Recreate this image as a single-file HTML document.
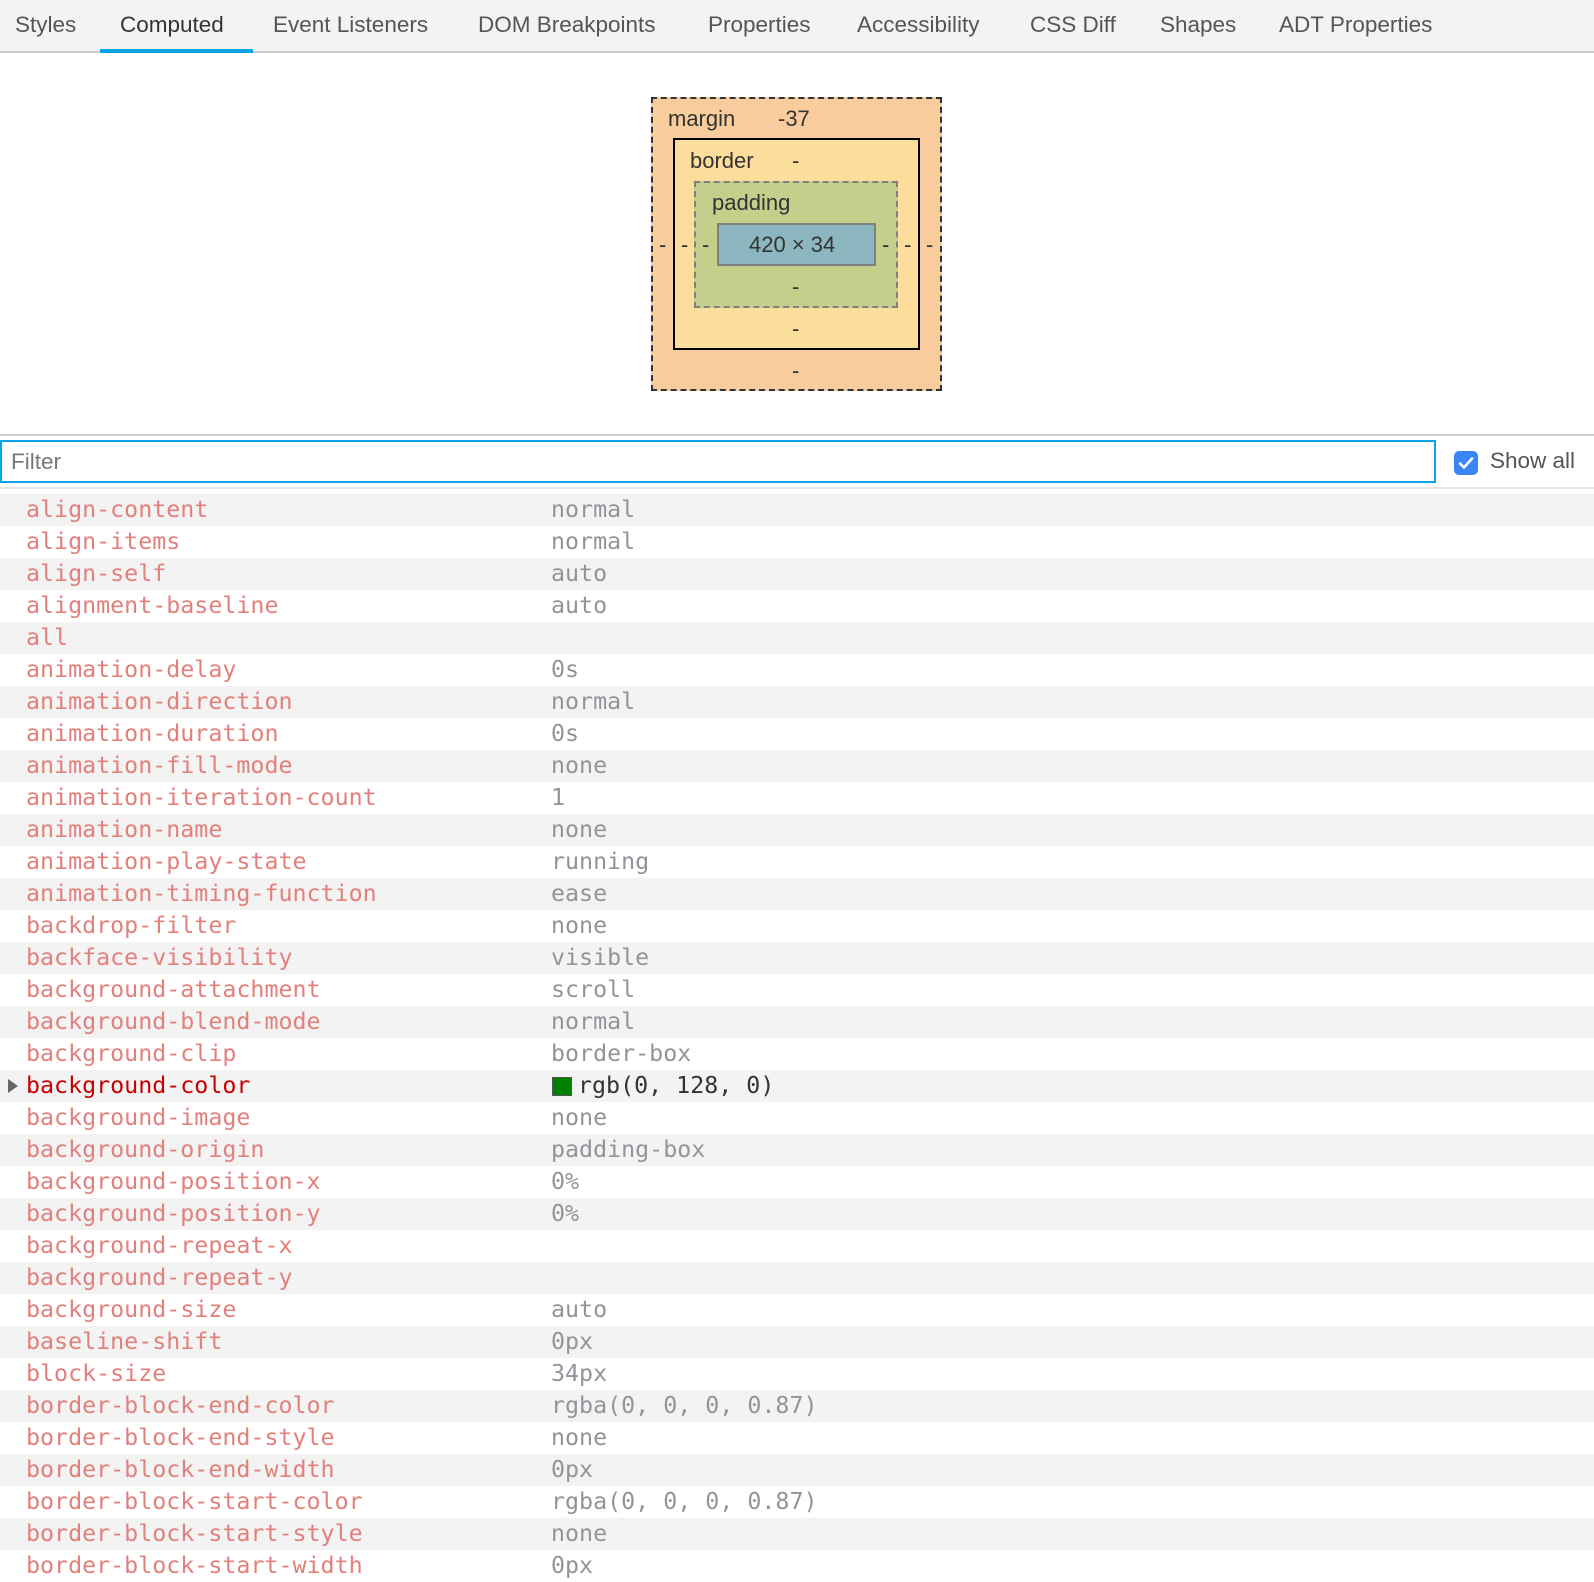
<!DOCTYPE html>
<html><head><meta charset="utf-8"><style>
*{margin:0;padding:0;box-sizing:border-box}
body{width:1594px;height:1568px;overflow:hidden;background:#fff;font-family:"Liberation Sans",Helvetica,Arial,sans-serif;position:relative}
.tabs{position:absolute;left:0;top:0;width:1594px;height:53px;background:#f3f3f3;border-bottom:2px solid #ccc}
.tab{position:absolute;top:12px;font-size:22.5px;color:#555}
.ul{position:absolute;left:100px;top:49px;width:153px;height:4px;background:#0aa3e8}
.bx{position:absolute;font-size:22px;color:#333}
.lbl{position:absolute;font-size:22px;color:#333;line-height:1}
.sep{position:absolute;left:0;top:434px;width:1594px;height:2px;background:#ccc}
.filter{position:absolute;left:0;top:440px;width:1436px;height:43px;border:2px solid #0aa3e8;font-size:22.5px;color:#777;padding:7px 9px}
.cb{position:absolute;left:1454px;top:451px;width:24px;height:24px;background:#3b84f5;border-radius:5px}
.rows{position:absolute;left:0;top:494px;width:1594px}
.r{height:32px;position:relative;font-family:"DejaVu Sans Mono","Liberation Mono",monospace;font-size:23.3px;line-height:32px}
.r:nth-child(odd){background:#f3f3f3}
.p{position:absolute;left:26px;color:#e2807c}
.v{position:absolute;left:551px;color:#90959a}
.hl .p{color:#c80000}.hl .v{color:#333;left:578px}
</style></head><body>
<div class="tabs">
<span class="tab" style="left:15px">Styles</span>
<span class="tab" style="left:120px;color:#333">Computed</span>
<span class="tab" style="left:273px">Event Listeners</span>
<span class="tab" style="left:478px">DOM Breakpoints</span>
<span class="tab" style="left:708px">Properties</span>
<span class="tab" style="left:857px">Accessibility</span>
<span class="tab" style="left:1030px">CSS Diff</span>
<span class="tab" style="left:1160px">Shapes</span>
<span class="tab" style="left:1279px">ADT Properties</span>
<div class="ul"></div>
</div>
<div class="bx" style="left:651px;top:97px;width:291px;height:294px;background:#f9cc9d;border:2px dashed #333"></div>
<div class="bx" style="left:673px;top:138px;width:247px;height:212px;background:#fddd9b;border:2px solid #000"></div>
<div class="bx" style="left:694px;top:181px;width:204px;height:127px;background:#c3d08b;border:2px dashed #808080"></div>
<div class="bx" style="left:717px;top:223px;width:159px;height:43px;background:#8cb6c0;border:2px solid #808080"></div>
<span class="lbl" style="left:668px;top:108px">margin</span>
<span class="lbl" style="left:778px;top:108px">-37</span>
<span class="lbl" style="left:690px;top:150px">border</span>
<span class="lbl" style="left:792px;top:150px">-</span>
<span class="lbl" style="left:712px;top:192px">padding</span>
<span class="lbl" style="left:749px;top:234px">420 × 34</span>
<span class="lbl" style="left:659px;top:234px">-</span>
<span class="lbl" style="left:681px;top:234px">-</span>
<span class="lbl" style="left:702px;top:234px">-</span>
<span class="lbl" style="left:882px;top:234px">-</span>
<span class="lbl" style="left:904px;top:234px">-</span>
<span class="lbl" style="left:926px;top:234px">-</span>
<span class="lbl" style="left:792px;top:276px">-</span>
<span class="lbl" style="left:792px;top:318px">-</span>
<span class="lbl" style="left:792px;top:360px">-</span>
<div class="sep"></div>
<div class="filter">Filter</div>
<div class="cb"><svg width="24" height="24" viewBox="0 0 24 24"><path d="M6 12.5l4 4 8-9" stroke="#fff" stroke-width="2.6" fill="none" stroke-linecap="round" stroke-linejoin="round"/></svg></div>
<span style="position:absolute;left:1490px;top:448px;font-size:22.5px;color:#555">Show all</span>
<div style="position:absolute;left:0;top:487px;width:1594px;height:2px;background:#e6e6e6"></div>
<div class="rows">
<div class="r"><span class="p">align-content</span><span class="v">normal</span></div>
<div class="r"><span class="p">align-items</span><span class="v">normal</span></div>
<div class="r"><span class="p">align-self</span><span class="v">auto</span></div>
<div class="r"><span class="p">alignment-baseline</span><span class="v">auto</span></div>
<div class="r"><span class="p">all</span></div>
<div class="r"><span class="p">animation-delay</span><span class="v">0s</span></div>
<div class="r"><span class="p">animation-direction</span><span class="v">normal</span></div>
<div class="r"><span class="p">animation-duration</span><span class="v">0s</span></div>
<div class="r"><span class="p">animation-fill-mode</span><span class="v">none</span></div>
<div class="r"><span class="p">animation-iteration-count</span><span class="v">1</span></div>
<div class="r"><span class="p">animation-name</span><span class="v">none</span></div>
<div class="r"><span class="p">animation-play-state</span><span class="v">running</span></div>
<div class="r"><span class="p">animation-timing-function</span><span class="v">ease</span></div>
<div class="r"><span class="p">backdrop-filter</span><span class="v">none</span></div>
<div class="r"><span class="p">backface-visibility</span><span class="v">visible</span></div>
<div class="r"><span class="p">background-attachment</span><span class="v">scroll</span></div>
<div class="r"><span class="p">background-blend-mode</span><span class="v">normal</span></div>
<div class="r"><span class="p">background-clip</span><span class="v">border-box</span></div>
<div class="r hl"><svg style="position:absolute;left:8px;top:9px" width="10" height="14"><path d="M0 0L10 7L0 14Z" fill="#666"/></svg><span class="p">background-color</span><span style="position:absolute;left:552px;top:7px;width:20px;height:19px;background:#008000;border:1px solid #555"></span><span class="v">rgb(0, 128, 0)</span></div>
<div class="r"><span class="p">background-image</span><span class="v">none</span></div>
<div class="r"><span class="p">background-origin</span><span class="v">padding-box</span></div>
<div class="r"><span class="p">background-position-x</span><span class="v">0%</span></div>
<div class="r"><span class="p">background-position-y</span><span class="v">0%</span></div>
<div class="r"><span class="p">background-repeat-x</span></div>
<div class="r"><span class="p">background-repeat-y</span></div>
<div class="r"><span class="p">background-size</span><span class="v">auto</span></div>
<div class="r"><span class="p">baseline-shift</span><span class="v">0px</span></div>
<div class="r"><span class="p">block-size</span><span class="v">34px</span></div>
<div class="r"><span class="p">border-block-end-color</span><span class="v">rgba(0, 0, 0, 0.87)</span></div>
<div class="r"><span class="p">border-block-end-style</span><span class="v">none</span></div>
<div class="r"><span class="p">border-block-end-width</span><span class="v">0px</span></div>
<div class="r"><span class="p">border-block-start-color</span><span class="v">rgba(0, 0, 0, 0.87)</span></div>
<div class="r"><span class="p">border-block-start-style</span><span class="v">none</span></div>
<div class="r"><span class="p">border-block-start-width</span><span class="v">0px</span></div>
</div>
</body></html>
